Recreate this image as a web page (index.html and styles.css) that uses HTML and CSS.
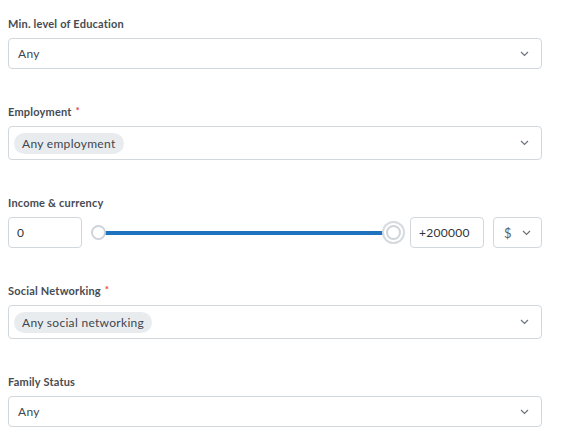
FILE: index.html
```html
<!DOCTYPE html>
<html lang="en">
<head>
    <meta charset="UTF-8">
    <meta name="viewport" content="width=device-width, initial-scale=1.0">
    <title>Audience filters</title>
    <link rel="stylesheet" href="styles.css">
</head>
<body>
    <div class="filters">
        <div class="field">
            <div class="field-label">Min. level of Education</div>
            <div class="select">
                <span class="select-value">Any</span>
                <svg class="chevron" width="9" height="6" viewBox="0 0 9 6"><polyline points="1,1 4.5,4.5 8,1" /></svg>
            </div>
        </div>

        <div class="field">
            <div class="field-label">Employment <span class="required">*</span></div>
            <div class="select select-tags">
                <span class="tag">Any employment</span>
                <svg class="chevron" width="9" height="6" viewBox="0 0 9 6"><polyline points="1,1 4.5,4.5 8,1" /></svg>
            </div>
        </div>

        <div class="field">
            <div class="field-label">Income &amp; currency</div>
            <div class="range-row">
                <input class="num-input" type="text" value="0">
                <div class="slider">
                    <div class="track"></div>
                    <span class="handle handle-min"></span>
                    <span class="handle handle-max"></span>
                </div>
                <input class="num-input" type="text" value="+200000">
                <div class="select currency">
                    <span class="select-value">$</span>
                    <svg class="chevron" width="9" height="6" viewBox="0 0 9 6"><polyline points="1,1 4.5,4.5 8,1" /></svg>
                </div>
            </div>
        </div>

        <div class="field">
            <div class="field-label">Social Networking <span class="required">*</span></div>
            <div class="select select-tags">
                <span class="tag">Any social networking</span>
                <svg class="chevron" width="9" height="6" viewBox="0 0 9 6"><polyline points="1,1 4.5,4.5 8,1" /></svg>
            </div>
        </div>

        <div class="field">
            <div class="field-label">Family Status</div>
            <div class="select">
                <span class="select-value">Any</span>
                <svg class="chevron" width="9" height="6" viewBox="0 0 9 6"><polyline points="1,1 4.5,4.5 8,1" /></svg>
            </div>
        </div>
    </div>
</body>
</html>
```

FILE: styles.css
```css
* {
    margin: 0;
    padding: 0;
    box-sizing: border-box;
}

body {
    font-family: 'Lato', 'Liberation Sans', sans-serif;
    background: #fff;
    color: #40464c;
}

.filters {
    width: 534px;
    padding: 16px 0 0 8px;
    box-sizing: content-box;
}

.field {
    margin-bottom: 35px;
}

.field-label {
    font-size: 11px;
    font-weight: bold;
    line-height: 16px;
    letter-spacing: 0.2px;
    color: #454b52;
    margin-bottom: 6px;
}

.required {
    color: #e0434f;
    font-size: 10px;
    position: relative;
    top: -2px;
    margin-left: 1px;
}

.select {
    display: flex;
    align-items: center;
    justify-content: space-between;
    height: 31px;
    padding: 0 12px 0 9px;
    border: 1px solid #d2d7dc;
    border-radius: 4px;
    background: #fff;
}

.select-tags {
    height: 34px;
    padding-left: 5px;
}

.select-value {
    font-size: 12px;
    letter-spacing: 0.3px;
    color: #40464c;
}

.chevron polyline {
    fill: none;
    stroke: #6c737a;
    stroke-width: 1.2;
}

.tag {
    display: inline-block;
    font-size: 12px;
    letter-spacing: 0.3px;
    line-height: 21px;
    padding: 0 8px;
    border-radius: 11px;
    background: #e9ecef;
    color: #40464c;
}

.range-row {
    display: flex;
    align-items: center;
    gap: 8px;
}

.num-input {
    width: 74px;
    height: 31px;
    padding: 0 8px;
    border: 1px solid #d2d7dc;
    border-radius: 4px;
    font-family: inherit;
    font-size: 12px;
    letter-spacing: 0.3px;
    color: #2f3438;
    background: #fff;
    outline: none;
}

.slider {
    position: relative;
    flex: 1;
    height: 31px;
}

.track {
    position: absolute;
    left: 8px;
    right: 9px;
    top: 14px;
    height: 4px;
    background: #1f72be;
}

.handle {
    position: absolute;
    top: 8px;
    width: 15px;
    height: 15px;
    border-radius: 50%;
    background: #fff;
    border: 2px solid #cfd4da;
}

.handle-min {
    left: 1px;
}

.handle-max {
    right: 1px;
    box-shadow: 0 0 0 2px #fff, 0 0 0 4px #d6dbe0;
}

.currency {
    width: 49px;
    margin-left: 1px;
    padding: 0 10px;
}

.currency .select-value {
    font-size: 13px;
    color: #5b6168;
}
```
